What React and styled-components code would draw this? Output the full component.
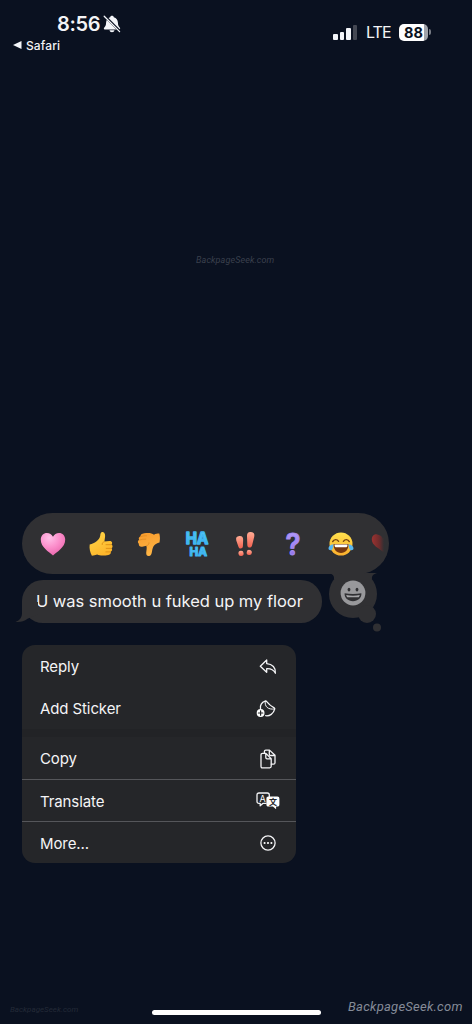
import React from 'react'
import styled, { createGlobalStyle } from 'styled-components'

const GlobalStyle = createGlobalStyle`
  body {
    margin: 0;
    background: #0a1120;
  }
`

const HeartIcon = () => (
  <svg width="26" height="26" viewBox="0 0 26 26">
    <defs>
      <radialGradient id="pink" cx="35%" cy="22%" r="85%">
        <stop offset="0" stopColor="#ffc0e8" />
        <stop offset=".5" stopColor="#fb8ecb" />
        <stop offset="1" stopColor="#e862a9" />
      </radialGradient>
    </defs>
    <path fill="url(#pink)" d="M13 24.5C9 21 .8 16.3.8 8.8.8 4.6 3.6 2 6.9 2 9.6 2 11.8 3.4 13 5.7 14.2 3.4 16.4 2 19.1 2c3.3 0 6.1 2.6 6.1 6.8 0 7.5-8.2 12.2-12.2 15.7Z" />
  </svg>
)

const ThumbUpIcon = () => (
  <svg width="26" height="26" viewBox="0 0 26 26">
    <defs>
      <linearGradient id="thumbUp" x1="0" y1="0" x2=".6" y2="1">
        <stop offset="0" stopColor="#ffd84a" />
        <stop offset="1" stopColor="#fdb52a" />
      </linearGradient>
    </defs>
    <path fill="url(#thumbUp)" d="M1.700 13.500c2.600-.5 4.800-1.700 6.600-3 2-1.500 3.500-3.300 3.900-5.800C12.500 1.600 13.300.500 14.900 1c2.200.7 2.600 3.400 2 6l-.5 3.600 5.100-.6c2.600-.2 3.400 2.300 1.900 3.500 1.600.9 1.500 3 .1 3.800 1.100 1.200.6 2.900-.8 3.500.6 1.500-.5 2.800-2.300 3.100-4.400.8-8.600.8-11.200-.4-1.800.6-3.600 1.200-5.300 1.300-1.700-3.200-2.800-7.200-2.200-11.300Z" />
    <path fill="none" stroke="#dc8d14" strokeWidth=".9" strokeLinecap="round" d="M18 13.700h5M18.200 17.400h4.800M17.900 20.900h4.200M16.200 10.800c-1.700.4-2.200 1.400-2 2.700" />
  </svg>
)

const ThumbDownIcon = () => (
  <svg width="26" height="26" viewBox="0 0 26 26">
    <defs>
      <linearGradient id="thumbDown" x1="0" y1="0" x2=".3" y2="1">
        <stop offset="0" stopColor="#f79a2b" />
        <stop offset="1" stopColor="#ffb545" />
      </linearGradient>
    </defs>
    <path fill="url(#thumbDown)" d="M23.300 2.600c-2 0-3.800.3-5.300 1.100-2.300-1.800-5.500-2-9.800-1.400-2.500.3-3.900 1.500-3.700 3C3 6 2.300 7.500 3.100 8.800 1.500 9.800 1.500 11.700 2.800 12.700c-.2 2.100 1.300 3.400 3.400 3l4.200-.9c.7 2.600 0 4.700-.2 7-.1 2.500 1.200 3.600 3 3.200 2.500-.5 2.600-3.300 3.100-6.200.5-2.800 1.600-4.700 3.600-5.900 1.300-.8 2.500-1.200 3.600-1.500.6-2.900.6-5.900-.2-8.800Z" />
    <path fill="none" stroke="#e08a20" strokeWidth=".8" strokeLinecap="round" d="M5 5.600c2-.7 3.600-.9 5.400-.8M3.500 9c2.200-.7 4.300-1 6.300-.9M10.700 14.700c1.700-.6 2.300-1.600 2.300-2.900" />
  </svg>
)

const HahaIcon = () => (
  <svg width="28" height="28" viewBox="0 0 28 28">
    <defs>
      <linearGradient id="haha" x1="0" y1="0" x2="0" y2="1">
        <stop offset="0" stopColor="#7fdcff" />
        <stop offset="1" stopColor="#23a7ea" />
      </linearGradient>
    </defs>
    <g fill="url(#haha)" stroke="#3fb6f0" strokeLinejoin="round" fontFamily="Inter, sans-serif" fontWeight="700" textAnchor="middle">
      <text x="14" y="13.500" fontSize="15.500" strokeWidth="1.500" textLength="22.500" lengthAdjust="spacingAndGlyphs">HA</text>
      <text x="15.200" y="25.500" fontSize="11.500" strokeWidth="1.200" textLength="17.500" lengthAdjust="spacingAndGlyphs">HA</text>
    </g>
  </svg>
)

const ExclaimIcon = () => (
  <svg width="26" height="28" viewBox="0 0 26 28">
    <defs>
      <linearGradient id="coral" x1="0" y1="0" x2="0" y2="1">
        <stop offset="0" stopColor="#ffab94" />
        <stop offset="1" stopColor="#f2604f" />
      </linearGradient>
    </defs>
    <g fill="url(#coral)">
      <g transform="rotate(-5 9 14)">
        <path d="M8 6c2.900 0 3.800 1.600 3.500 4l-.8 6.500c-.5 2.700-4 2.700-4.500 0L4.600 10C4.200 7.500 5.300 6 8 6Z" />
        <circle cx="8.200" cy="23.400" r="2.600" />
      </g>
      <g transform="rotate(7 18 14)">
        <path d="M17.500 2c3.100 0 4.100 1.700 3.800 4.200l-1.100 9.300c-.5 2.800-4.300 2.800-4.700 0l-1.500-9.300C13.700 3.600 14.800 2 17.500 2Z" />
        <circle cx="18.300" cy="22.500" r="2.600" />
      </g>
    </g>
  </svg>
)

const QuestionIcon = () => (
  <svg width="26" height="34" viewBox="0 0 26 34">
    <defs>
      <linearGradient id="violet" x1="0" y1="0" x2="0" y2="1">
        <stop offset="0" stopColor="#baa2ff" />
        <stop offset="1" stopColor="#8b6be6" />
      </linearGradient>
    </defs>
    <text x="13" y="28" fontSize="29.500" fontWeight="600" fontFamily="Inter, sans-serif" textAnchor="middle" fill="url(#violet)" stroke="#a78df2" strokeWidth="1" strokeLinejoin="round" textLength="15" lengthAdjust="spacingAndGlyphs">?</text>
  </svg>
)

const JoyIcon = () => (
  <svg width="26" height="26" viewBox="0 0 26 26">
    <defs>
      <linearGradient id="joy" x1="0" y1="0" x2="0" y2="1">
        <stop offset="0" stopColor="#ffe04d" />
        <stop offset="1" stopColor="#fbb02d" />
      </linearGradient>
    </defs>
    <circle cx="13" cy="13" r="11.500" fill="url(#joy)" />
    <path d="M4.700 10.600C6 8 9 8 10.600 10.300M15.400 10.300C17 8 20 8 21.300 10.600" fill="none" stroke="#74400f" strokeWidth="1.400" strokeLinecap="round" />
    <path d="M5.500 13h15c.3 5-3 9-7.500 9s-7.800-4-7.500-9Z" fill="#77380f" />
    <path d="M6.500 13.400h13c0 1.500-.5 2.700-1.200 2.900H7.700c-.7-.2-1.200-1.400-1.200-2.900Z" fill="#fff" />
    <path d="M5.400 13.200C2.500 13.500.400 15.200.500 17.500c.1 2 3 2.300 4 .4.600-1.300.8-3 .9-4.700ZM20.600 13.200c2.900.3 5 2 4.900 4.300-.1 2-3 2.300-4 .4-.6-1.300-.8-3-.9-4.700Z" fill="#58b7f2" />
  </svg>
)

const HalfHeartIcon = () => (
  <svg width="18" height="26" viewBox="0 0 18 26">
    <defs>
      <linearGradient id="fade" x1="0" y1="0" x2="1" y2="0">
        <stop offset="0" stopColor="#9c3230" />
        <stop offset=".6" stopColor="#6e2c2d" />
        <stop offset="1" stopColor="#303033" />
      </linearGradient>
    </defs>
    <path fill="url(#fade)" d="M13 21.500C8 17.500.8 14.500.8 8.600.8 4.800 3.500 3 6.200 3.400c2.500.3 4.600 1.500 5.600 4l1.200-1Z" />
  </svg>
)

const GrinIcon = () => (
  <svg width="26" height="26" viewBox="0 0 26 26">
    <circle cx="13" cy="13" r="12.400" fill="#98989b" />
    <ellipse cx="9" cy="9.600" rx="1.400" ry="1.900" fill="#303033" />
    <ellipse cx="17" cy="9.600" rx="1.400" ry="1.900" fill="#303033" />
    <path d="M4.600 13.300c5 1 11.800 1 16.800 0 .3 4.600-3.400 7.900-8.400 7.900s-8.700-3.300-8.400-7.900Z" fill="#303033" />
    <path d="M6.200 15.100c4.200.8 9.400.8 13.600 0-.2 1-.6 1.700-1 2.100H7.200c-.4-.4-.8-1.100-1-2.100Z" fill="#a6a6a9" />
  </svg>
)

const MutedBell = () => (
  <svg width="18" height="18" viewBox="0 0 18 18">
    <path fill="#f4f6fa" d="M9 .8c1 0 1.700.6 1.800 1.400 2.600.7 4 2.600 4.100 5.300.1 3.100.8 4 2 5.200.5.500.3 1.700-.6 1.700H1.700c-.9 0-1.100-1.200-.6-1.700 1.200-1.200 1.900-2.100 2-5.200.1-2.700 1.500-4.600 4.100-5.300C7.300 1.400 8 .8 9 .8ZM6.500 15.300h5c-.2 1.300-1.200 2-2.500 2s-2.300-.7-2.500-2Z" />
    <path d="M1.600.9 17 16.300" stroke="#0a1120" strokeWidth="2.600" />
    <path d="M1.200 1.200 16.600 16.600" stroke="#f4f6fa" strokeWidth="1.300" strokeLinecap="round" />
  </svg>
)

const ReplyIcon = () => (
  <svg width="18" height="16" viewBox="0 0 18 16">
    <path d="M7.700 1 1.300 7.200l6.400 6.100V9.700c4-.2 6.700.8 8.700 4.500.5-5.300-2.900-9.300-8.700-9.600V1Z" />
  </svg>
)

const StickerIcon = () => (
  <svg width="23" height="18" viewBox="0 0 23 18">
    <path d="M4.500 8.800C4 5.400 5.900 2.300 9.200 1.100c.6-.2 1.100 0 1.500.5 2 2.600 4.500 4.600 7.500 6.300.5.300.7.800.5 1.300-1.200 4.500-5 7.100-9 6.500" />
    <path d="M9.300 1.200c-1 5.500 2.800 8.700 9.200 7.800" strokeWidth="1" />
    <circle cx="4.600" cy="13" r="3.900" fill="#fff" stroke="none" />
    <path d="M4.600 10.800v4.400M2.400 13h4.400" stroke="#252629" strokeWidth="1.200" />
  </svg>
)

const CopyIcon = () => (
  <svg width="16" height="20" viewBox="0 0 16 20">
    <path d="M4.400 4.300V2.600c0-1 .5-1.500 1.500-1.500h3.600l5.500 5.200v7.400c0 1-.5 1.500-1.500 1.500h-2.100M9.300 1.200v4c0 .9.400 1.300 1.300 1.300H15" />
    <path d="M1 5.900c0-1 .5-1.500 1.500-1.500h3.400l5.300 5.400v7.500c0 1-.5 1.500-1.500 1.500H2.500c-1 0-1.500-.5-1.500-1.500ZM5.800 4.500v4.100c0 .9.400 1.300 1.300 1.300h4.100" />
  </svg>
)

const TranslateIcon = () => (
  <svg width="24" height="18" viewBox="0 0 24 18">
    <path d="M10 11.400H6.800L4.200 13.800v-2.400H3c-1.300 0-2-.7-2-2V3c0-1.300.7-2 2-2h8.300c1.300 0 2 .7 2 2v2" />
    <path d="M12.500 4.600h8.800c1.400 0 2.100.7 2.100 2.100v5.800c0 1.400-.7 2.100-2.100 2.100h-1.200v2.700l-3.200-2.700h-4.400c-1.400 0-2.100-.7-2.100-2.100V6.700c0-1.400.7-2.100 2.100-2.100Z" fill="#fff" stroke="none" />
    <text x="6.600" y="9.500" fontSize="9" fontFamily="Inter, sans-serif" textAnchor="middle" fill="#fff" stroke="none">A</text>
    <text x="16.900" y="12.500" fontSize="8" fontWeight="700" fontFamily="'Noto Sans CJK SC', sans-serif" textAnchor="middle" fill="#252629" stroke="none">文</text>
  </svg>
)

const MoreIcon = () => (
  <svg width="16" height="16" viewBox="0 0 16 16">
    <circle cx="8" cy="8" r="7.100" />
    <g fill="#fff" stroke="none">
      <circle cx="4.600" cy="8" r="1.050" />
      <circle cx="8" cy="8" r="1.050" />
      <circle cx="11.400" cy="8" r="1.050" />
    </g>
  </svg>
)

const groups = [
  [
    { label: 'Reply', icon: <ReplyIcon /> },
    { label: 'Add Sticker', icon: <StickerIcon /> },
  ],
  [
    { label: 'Copy', icon: <CopyIcon /> },
    { label: 'Translate', icon: <TranslateIcon /> },
    { label: 'More...', icon: <MoreIcon /> },
  ],
]

const reactions = [HeartIcon, ThumbUpIcon, ThumbDownIcon, HahaIcon, ExclaimIcon, QuestionIcon, JoyIcon]

function App() {
  return (
    <>
      <GlobalStyle />
      <Screen>
        <StatusBar>
          <Left>
            <Time>8:56 <MutedBell /></Time>
            <BackLink>
              <svg width="9" height="8" viewBox="0 0 9 8"><path d="M0 4 8.500 0v8Z" fill="#f4f6fa" /></svg>
              <span>Safari</span>
            </BackLink>
          </Left>
          <Right>
            <Signal>
              <Bar $h={6} />
              <Bar $h={8} />
              <Bar $h={12} />
              <Bar $h={15} $dim />
            </Signal>
            <Network>LTE</Network>
            <Battery>88</Battery>
            <BatteryTip />
          </Right>
        </StatusBar>

        <Content>
          <Reactions>
            {reactions.map((Icon, i) => (
              <Reaction key={i}><Icon /></Reaction>
            ))}
            <LastReaction><HalfHeartIcon /></LastReaction>
            <EmojiTail>
              <svg width="64" height="62" viewBox="0 0 64 62">
                <g fill="#303033">
                  <path d="M8 0h48c-3.500 1-5.500 3-5 6L36 18 13 6c.5-3-1.500-5-5-6Z" />
                  <circle cx="32" cy="21" r="24" />
                  <circle cx="46" cy="41" r="9" />
                  <circle cx="56" cy="54.500" r="4" />
                </g>
              </svg>
              <Grin><GrinIcon /></Grin>
            </EmojiTail>
          </Reactions>

          <Bubble>
            U was smooth u fuked up my floor
            <BubbleTail>
              <svg width="24" height="24" viewBox="0 0 24 24">
                <path d="M7 0v11c0 4.500-2 7-6.500 9 4.500.4 8.700-.4 12-3.200L23 12V0Z" fill="#303033" />
              </svg>
            </BubbleTail>
          </Bubble>

          <Menu>
            {groups.map((items, g) => (
              <Group key={g} $lined={g > 0}>
                {items.map((item) => (
                  <Item key={item.label}>
                    <span>{item.label}</span>
                    <ItemIcon>{item.icon}</ItemIcon>
                  </Item>
                ))}
              </Group>
            ))}
          </Menu>
        </Content>

        <HomeIndicator />
        <Watermark $left={196} $top={255} $size={9} $color="#3a404d" $spacing="0.1px">BackpageSeek.com</Watermark>
        <Watermark $left={10} $top={1005} $size={8} $color="#232a37" $spacing="0">BackpageSeek.com</Watermark>
        <Watermark $left={348} $top={999} $size={13} $color="#858b98" $spacing="0.24px">BackpageSeek.com</Watermark>
      </Screen>
    </>
  )
}

export default App

const Screen = styled.div`
  position: relative;
  display: flex;
  flex-direction: column;
  width: 472px;
  height: 1024px;
  overflow: hidden;
  background: #0a1120;
  color: #f4f4f6;
  font-family: Inter, 'Liberation Sans', sans-serif;
  svg {
    display: block;
    flex: none;
  }
`

const StatusBar = styled.div`
  display: flex;
  justify-content: space-between;
  height: 513px;
  padding: 12px 41px 0 13px;
  box-sizing: border-box;
`

const Left = styled.div`
  display: flex;
  flex-direction: column;
`

const Time = styled.div`
  display: flex;
  align-items: center;
  gap: 3px;
  height: 24px;
  padding-left: 44px;
  font-size: 20px;
  font-weight: 600;
  letter-spacing: -0.3px;
`

const BackLink = styled.div`
  display: flex;
  align-items: center;
  gap: 4px;
  height: 18px;
  font-size: 12px;
  font-weight: 500;
  letter-spacing: 0.1px;
`

const Right = styled.div`
  display: flex;
  align-items: center;
  height: 40px;
`

const Signal = styled.div`
  display: flex;
  align-items: flex-end;
  gap: 2px;
  height: 15px;
  margin-right: 9px;
`

const Bar = styled.div`
  width: 4.500px;
  height: ${(p) => p.$h}px;
  border-radius: 1px;
  background: ${(p) => (p.$dim ? '#444853' : '#f4f6fa')};
`

const Network = styled.div`
  width: 33px;
  font-size: 16px;
  letter-spacing: -0.9px;
`

const Battery = styled.div`
  width: 29px;
  height: 17px;
  border-radius: 5px;
  background: linear-gradient(90deg, #fff 87%, #a0a3aa 87%);
  color: #0a1120;
  font-size: 14.500px;
  font-weight: 700;
  line-height: 17px;
  text-align: center;
`

const BatteryTip = styled.div`
  width: 2px;
  height: 6px;
  margin-left: 1px;
  border-radius: 0 3px 3px 0;
  background: #777b84;
`

const Content = styled.div`
  display: flex;
  flex-direction: column;
  align-items: flex-start;
  padding-left: 22px;
`

const Reactions = styled.div`
  position: relative;
  display: flex;
  align-items: center;
  width: 367px;
  height: 61px;
  padding-left: 7px;
  box-sizing: border-box;
  border-radius: 31px;
  background: #303033;
`

const Reaction = styled.div`
  display: flex;
  justify-content: center;
  flex: none;
  width: 48px;
`

const LastReaction = styled.div`
  margin-left: 6px;
`

const EmojiTail = styled.div`
  position: absolute;
  left: 299px;
  top: 60px;
`

const Grin = styled.div`
  position: absolute;
  left: 19px;
  top: 7px;
`

const Bubble = styled.div`
  position: relative;
  width: 300px;
  height: 43px;
  margin-top: 6px;
  padding-left: 14px;
  box-sizing: border-box;
  border-radius: 21px;
  background: #303033;
  font-size: 16.500px;
  line-height: 43px;
  letter-spacing: -0.03px;
  white-space: nowrap;
`

const BubbleTail = styled.div`
  position: absolute;
  left: -7px;
  top: 22px;
`

const Menu = styled.div`
  width: 274px;
  height: 218px;
  margin-top: 22px;
  border-radius: 13px;
  overflow: hidden;
  background: #252629;
`

const Item = styled.div`
  display: flex;
  align-items: center;
  justify-content: space-between;
  height: 42px;
  padding: 1px 16px 0 18px;
  box-sizing: border-box;
  font-size: 15px;
  letter-spacing: -0.1px;
`

const Group = styled.div`
  border-bottom: ${(p) => (p.$lined ? 'none' : '8px solid #222326')};
  ${Item} + ${Item} {
    border-top: ${(p) => (p.$lined ? '1px solid #55565a' : 'none')};
  }
`

const ItemIcon = styled.div`
  display: flex;
  justify-content: center;
  width: 25px;
  fill: none;
  stroke: #f4f4f6;
  stroke-width: 1.300;
  stroke-linejoin: round;
  stroke-linecap: round;
`

const HomeIndicator = styled.div`
  width: 169px;
  height: 5px;
  margin: auto auto 9px;
  border-radius: 3px;
  background: #fff;
`

const Watermark = styled.div`
  position: absolute;
  left: ${(p) => p.$left}px;
  top: ${(p) => p.$top}px;
  color: ${(p) => p.$color};
  font-family: Roboto, sans-serif;
  font-size: ${(p) => p.$size}px;
  font-style: italic;
  line-height: 1.2;
  letter-spacing: ${(p) => p.$spacing};
  white-space: nowrap;
`
